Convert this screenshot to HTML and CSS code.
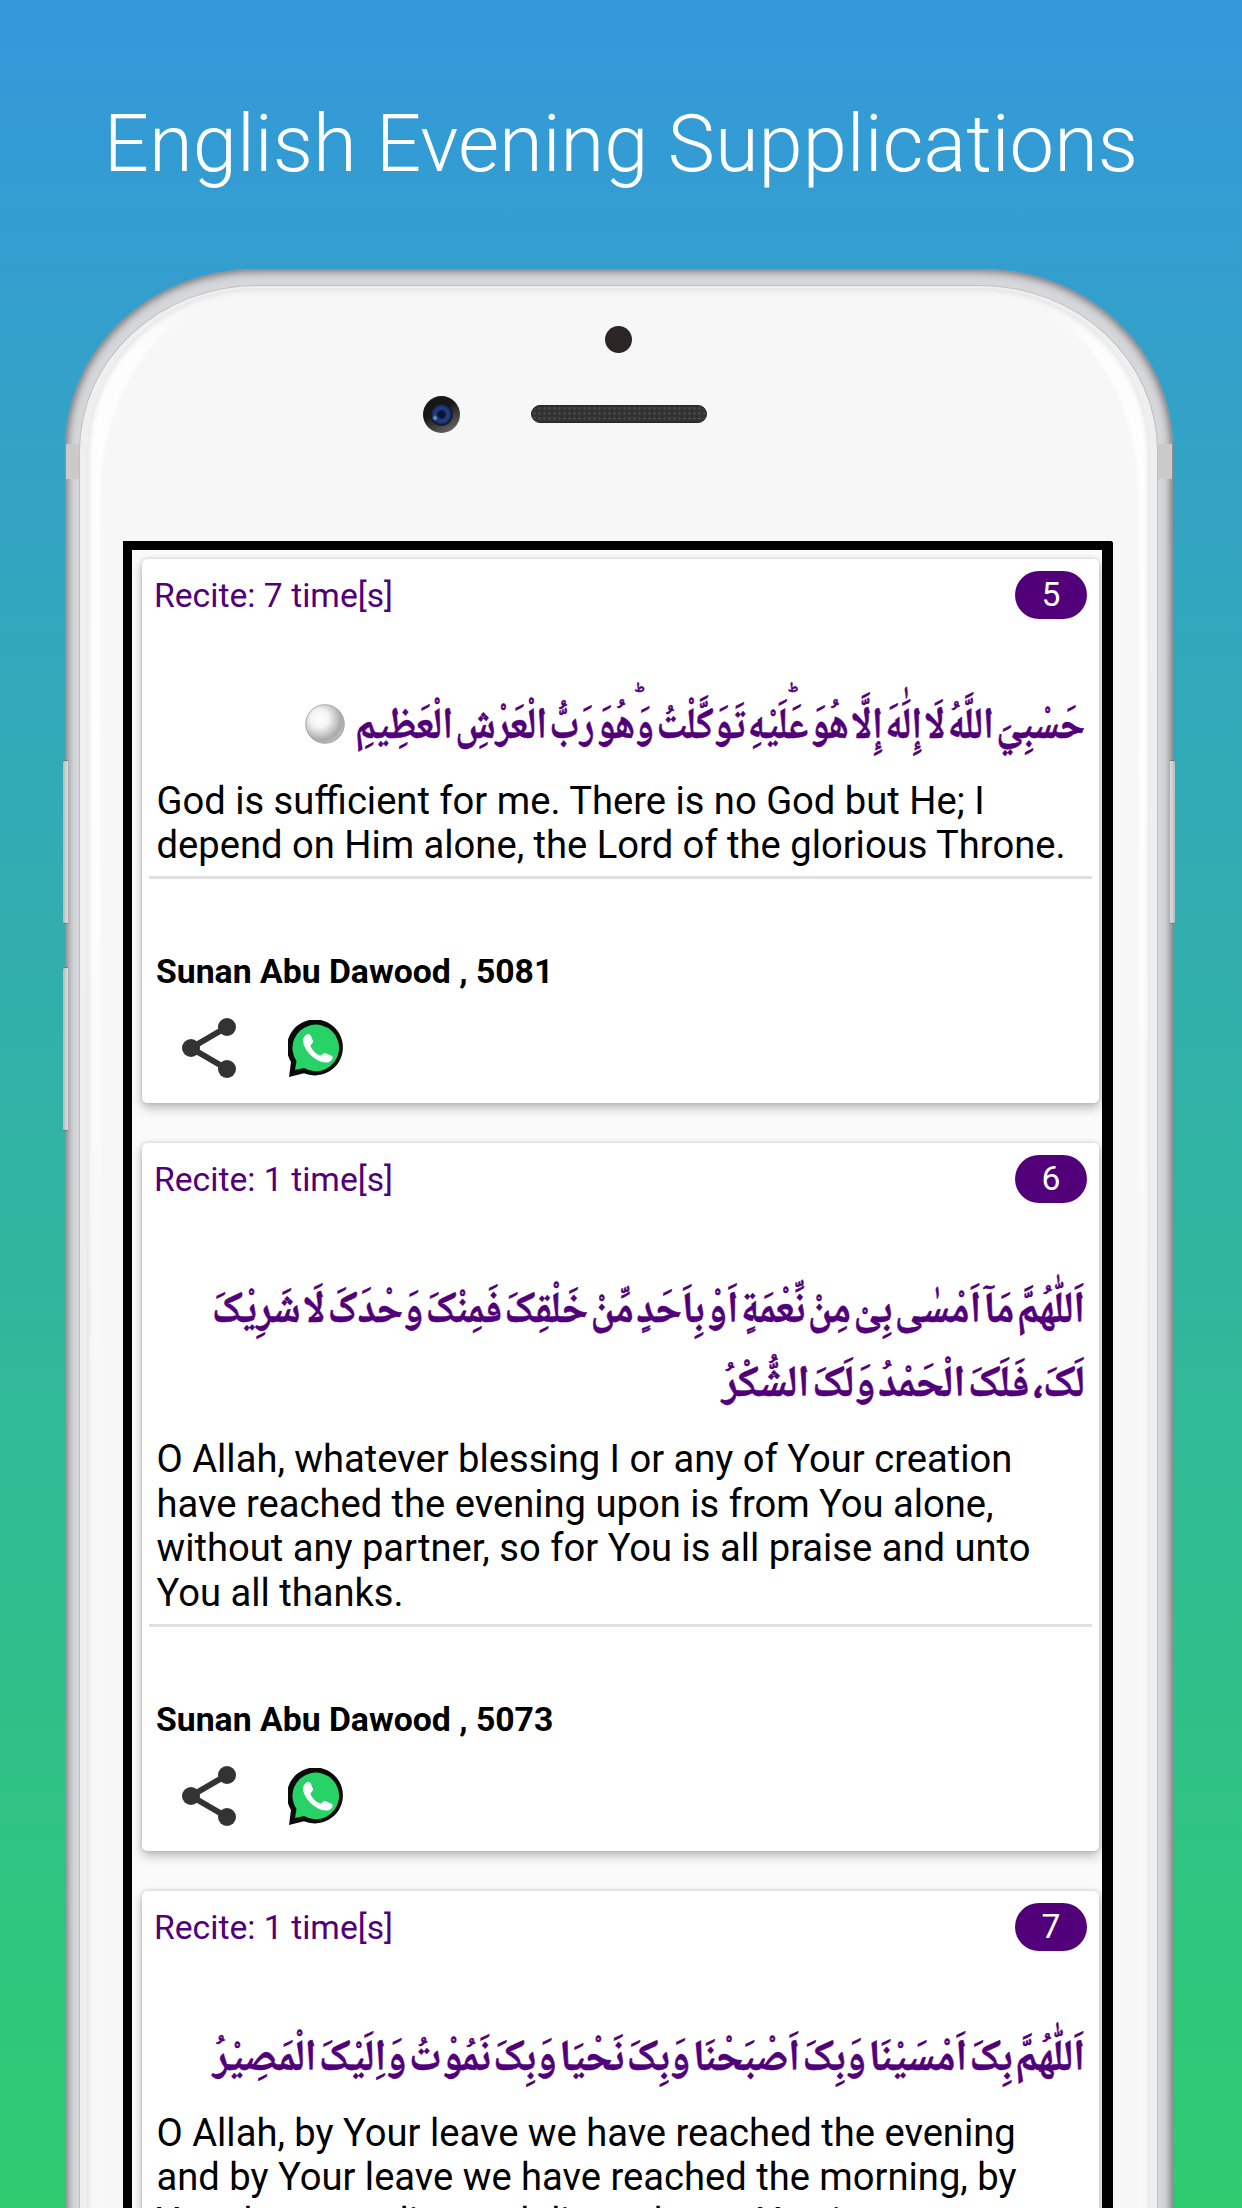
FILE: index.html
```html
<!DOCTYPE html>
<html lang="en">
<head>
<meta charset="utf-8">
<title>English Evening Supplications</title>
<link rel="stylesheet" href="styles.css">
</head>
<body>
<svg class="defs" width="0" height="0" aria-hidden="true">
  <symbol id="share" viewBox="0 0 54 60">
    <path d="M45 9 9 30l36 21" fill="none" stroke="#333" stroke-width="6"/>
    <circle cx="45" cy="9" r="9" fill="#333"/><circle cx="9" cy="30" r="9" fill="#333"/><circle cx="45" cy="51" r="9" fill="#333"/>
  </symbol>
  <symbol id="whatsapp" viewBox="0 0 56 57">
    <path d="M1 57 3 42A28 28 0 1 1 16 53.200Z" fill="#0b0b0b"/>
    <path d="M7 50 8.500 41A23.300 23.300 0 1 1 16 48Z" fill="#27d366"/>
    <path d="M18.500 14.500C21 13.500 22.500 14.500 23 16L25 21C25.500 23 22.500 24.500 22.500 26C24 30 28 34 32 35.500C33.500 36 35 32.500 37 33L44 36C46 37.500 43.500 42 39 42.500C28 43 15 30 15 20.500C15 17.500 17 15.500 18.500 14.500Z" fill="#fff"/>
  </symbol>
</svg>
<main class="poster">
  <h1 class="title">English Evening Supplications</h1>
  <div class="phone">
    <i class="key key-up"></i><i class="key key-down"></i><i class="key key-power"></i>
    <i class="band band-left"></i><i class="band band-right"></i>
    <div class="rim"><div class="glass"><div class="face"></div></div></div>
    <i class="sensor"></i><i class="camera"></i><i class="speaker"></i>
    <div class="screen">
      <article class="card">
        <header class="head"><span>Recite: 7 time[s]</span><b class="badge">5</b></header>
        <svg class="arabic" viewBox="0 0 943 74.500" height="74.500">
          <text x="936" y="48.500" textLength="730" lengthAdjust="spacingAndGlyphs">حَسْبِيَ اللَّهُ لَا إِلَٰهَ إِلَّا هُوَ عَؕلَيْهِ تَوَكَّلْتُ وَؕهُوَ رَبُّ الْعَرْشِ الْعَظِيمِ</text>
          <defs><radialGradient id="pearl" cx=".36" cy=".36" r=".66"><stop offset="0" stop-color="#fff"/><stop offset=".35" stop-color="#f4f4f4"/><stop offset=".85" stop-color="#aaa"/><stop offset="1" stop-color="#b8b8b8"/></radialGradient></defs>
          <circle cx="176" cy="35" r="19.300" fill="url(#pearl)" stroke="#999" stroke-width=".8"/>
        </svg>
        <p class="meaning">God is sufficient for me. There is no God but He; I<br>depend on Him alone, the Lord of the glorious Throne.</p>
        <p class="source">Sunan Abu Dawood , 5081</p>
        <div class="actions"><svg width="54" height="60"><use href="#share"/></svg><svg width="56" height="57"><use href="#whatsapp"/></svg></div>
      </article>
      <article class="card">
        <header class="head"><span>Recite: 1 time[s]</span><b class="badge">6</b></header>
        <svg class="arabic" viewBox="0 0 943 149" height="149">
          <text x="936" y="48.500" textLength="873" lengthAdjust="spacingAndGlyphs">اَللّٰهُمَّ مَآ اَمْسٰی بِیْ مِنْ نِّعْمَةٍ اَوْ بِاَحَدٍ مِّنْ خَلْقِکَ فَمِنْکَ وَحْدَکَ لَا شَرِیْکَ</text>
          <text x="936" y="123" textLength="363" lengthAdjust="spacingAndGlyphs">لَکَ، فَلَکَ الْحَمْدُ وَلَکَ الشُّکْرُ</text>
        </svg>
        <p class="meaning">O Allah, whatever blessing I or any of Your creation<br>have reached the evening upon is from You alone,<br>without any partner, so for You is all praise and unto<br>You all thanks.</p>
        <p class="source">Sunan Abu Dawood , 5073</p>
        <div class="actions"><svg width="54" height="60"><use href="#share"/></svg><svg width="56" height="57"><use href="#whatsapp"/></svg></div>
      </article>
      <article class="card">
        <header class="head"><span>Recite: 1 time[s]</span><b class="badge">7</b></header>
        <svg class="arabic" viewBox="0 0 943 74.500" height="74.500">
          <text x="936" y="48.500" textLength="872" lengthAdjust="spacingAndGlyphs">اَللّٰهُمَّ بِکَ اَمْسَیْنَا وَبِکَ اَصْبَحْنَا وَبِکَ نَحْیَا وَبِکَ نَمُوْتُ وَاِلَیْکَ الْمَصِیْرُ</text>
        </svg>
        <p class="meaning">O Allah, by Your leave we have reached the evening<br>and by Your leave we have reached the morning, by<br>Your leave we live and die and unto You is our</p>
      </article>
    </div>
  </div>
</main>
</body>
</html>
```
FILE: styles.css
```css
* { box-sizing: border-box; }
html, body { margin: 0; height: 2208px; overflow: hidden; }
body { font-family: Roboto, "Liberation Sans", sans-serif; }
.defs { position: absolute; }
.poster {
  height: 2208px;
  overflow: hidden;
  background: linear-gradient(#3498db, #2ecc71);
  display: flex;
  flex-direction: column;
  align-items: center;
}
.title {
  flex: none;
  margin: 0;
  height: 269px;
  padding-top: 96px;
  font-size: 79.5px;
  line-height: 96px;
  font-weight: 300;
  color: #fff;
  white-space: nowrap;
}

/* device body */
.phone {
  position: relative;
  flex: none;
  width: 1108px;
  height: 2140px;
  margin-right: 4px;
  padding: 272px 0 0 58px;
  border-radius: 190px 190px 0 0 / 180px 180px 0 0;
  background: #d6d7da;
  box-shadow: inset 0 0 9px 2px #66676d;
}
.rim {
  position: absolute;
  inset: 16px 15px 0 14px;
  padding: 2px 7px 0;
  border: 1.5px solid #bfc0c3;
  border-bottom: 0;
  border-radius: 178px 178px 0 0 / 166px 166px 0 0;
  background: #efefef;
}
.glass {
  height: 100%;
  padding: 9px 12px 0 14px;
  border-radius: 170px 170px 0 0 / 164px 164px 0 0;
  background: linear-gradient(#f4f4f4, #fdfdfd 60px, #fff 480px, #f8f8f8 1100px);
  box-shadow: inset 0 0 5px 2px #e2e2e2;
}
.face {
  height: 100%;
  border-radius: 150px 150px 0 0 / 200px 200px 0 0;
  background: #f7f7f7;
  box-shadow: 0 0 4px #f7f7f7;
}
.band { position: absolute; top: 175px; width: 14px; height: 35px; background: #cbcac9; }
.band-left { left: 1px; }
.band-right { right: 1px; }
.key {
  position: absolute;
  width: 5px;
  height: 164px;
  background: linear-gradient(90deg, #b9bbbd, #dcdee0);
  border: solid #77797c;
  border-width: 1px 0;
  border-radius: 2px 0 0 2px;
}
.key-up { left: -2px; top: 491px; }
.key-down { left: -2px; top: 698px; }
.key-power { right: -2px; top: 491px; transform: scaleX(-1); }
.sensor { position: absolute; left: 540px; top: 57px; width: 27px; height: 27px; border-radius: 50%; background: #2b2625; }
.camera {
  position: absolute;
  left: 358px;
  top: 127px;
  width: 37px;
  height: 37px;
  border-radius: 50%;
  background:
    radial-gradient(circle at 12px 22px, #7fb4e8 0, transparent 3px),
    radial-gradient(circle at 50% 50%, #0b1230 0 3px, #24428c 6px, #1b2f66 9px, #151515 10.5px, transparent 12px),
    linear-gradient(150deg, #181818 40%, #777);
}
.speaker {
  position: absolute;
  left: 466px;
  top: 136px;
  width: 176px;
  height: 18px;
  border-radius: 9px;
  background: radial-gradient(circle, #454948 0 1px, transparent 1.6px) 0 0 / 5px 5px #303332;
  border: 1px solid #252525;
}

/* app screen */
.screen {
  position: relative;
  width: 990px;
  height: 1800px;
  overflow: hidden;
  border: solid #000;
  border-width: 9px 11px 0 9px;
  border-radius: 0 3px 0 0;
  background: #fafafa;
  display: flex;
  flex-direction: column;
  gap: 40px;
  padding: 9px 3px 0 10px;
}
.card {
  flex: none;
  border-radius: 5px;
  background: #fff;
  box-shadow: 0 5px 11px rgba(0, 0, 0, .25), 0 0 4px rgba(0, 0, 0, .16);
  padding: 12px 7px 25px;
}
.head {
  display: flex;
  justify-content: space-between;
  align-items: center;
  height: 48px;
  padding: 0 5px;
  font-size: 33.7px;
  color: #520079;
}
.badge {
  width: 72px;
  height: 48px;
  border-radius: 24px;
  background: #520079;
  color: #fff;
  font-weight: 400;
  line-height: 48px;
  text-align: center;
}
.arabic { display: block; width: 943px; margin-top: 70px; overflow: visible; }
.arabic text {
  direction: rtl;
  font: 700 44px "Noto Naskh Arabic", "DejaVu Sans", sans-serif;
  word-spacing: -7px;
  fill: #520079;
  stroke: #520079;
  stroke-width: .5px;
}
.meaning {
  margin: 15px 0 0;
  padding: 0 0 8px 7.5px;
  border-bottom: 3px solid #e0e0e0;
  font-size: 38.15px;
  line-height: 44.6px;
  color: #000;
  white-space: nowrap;
}
.source {
  margin: 73px 0 0 7px;
  font-size: 33.75px;
  line-height: 40px;
  font-weight: 700;
  color: #000;
}
.actions { display: flex; align-items: center; gap: 52px; margin: 26.5px 0 0 33px; }
```
